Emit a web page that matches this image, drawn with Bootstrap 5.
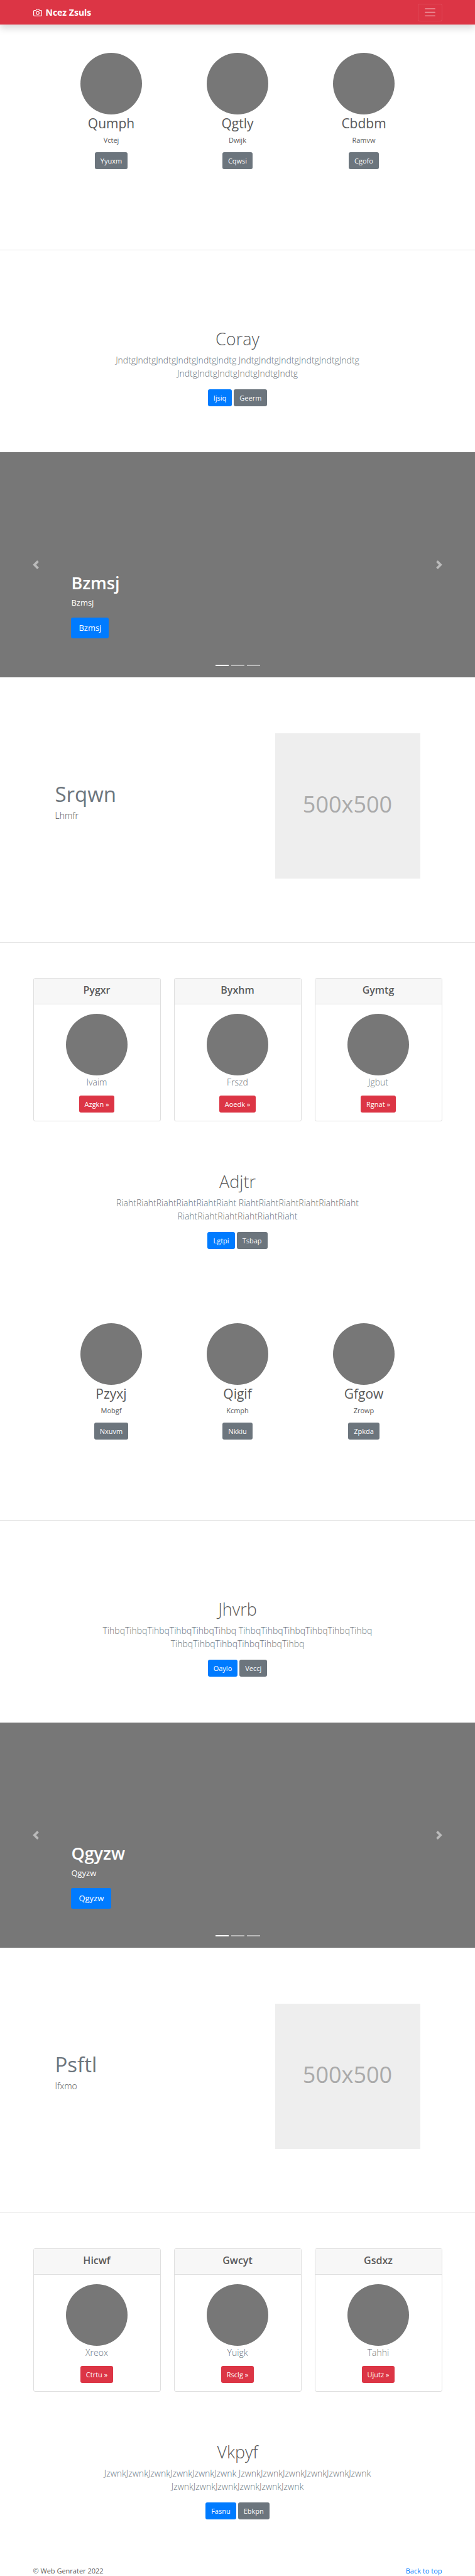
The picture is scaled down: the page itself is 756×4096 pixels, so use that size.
<!DOCTYPE html>
<html lang="en">
<head>
<meta charset="utf-8">
<meta name="viewport" content="width=device-width, initial-scale=1">
<title>Ncez Zsuls</title>
<link href="https://cdn.jsdelivr.net/npm/bootstrap@5.3.0/dist/css/bootstrap.min.css" rel="stylesheet">
<style>
  body { font-family: "Open Sans", "Noto Sans", sans-serif; font-size: 11px; line-height: 17px; color: #5a5a5a; background: #fff; }
  .wrap { max-width: 651px; margin-inline: auto; }
  .topbar { height: 39px; background: #dc3545; box-shadow: 0 6px 11px rgba(0,0,0,.15); }
  .brand { font-size: 14px; font-weight: 700; line-height: 20px; color: #fff; gap: 6px; }
  .toggler { height: 28px; padding: 0 8px; border: 1px solid rgba(255,255,255,.1); border-radius: 3px; background: none; }
  .toggler svg { display: block; }
  .action { font-size: 11px; line-height: 17px; padding: 4px 8px; border-radius: 3px; color: #fff; border: 1px solid transparent; display: inline-block; }
  .action.large { font-size: 13px; line-height: 21px; padding: 5px 11px; }
  .pair { gap: 3px; }
  .blue { background: #007bff; }
  .grey { background: #6c757d; }
  .red { background: #dc3545; }
  .disc { width: 98px; height: 98px; border-radius: 50%; background: #777; margin: 0 auto; }
  .people { max-width: 603px; margin: 0 auto; padding: 45px 0 128px; }
  .people h2 { font-size: 21px; line-height: 28px; margin: 0 0 4px; font-weight: 400; }
  .people p { margin: 0 0 11px; }
  .rule { height: 1px; margin: 0; border: 0; background: #e5e5e5; opacity: 1; }
  .hero { padding: 73px 0; }
  .rule + .hero { padding-top: 124px; }
  .hero h1 { font-size: 27px; line-height: 34px; font-weight: 300; margin: 0 0 6px; }
  .intro { font-size: 14px; line-height: 21px; font-weight: 300; }
  .hero .intro { color: #6c757d; margin: 0 auto 15px; max-width: 448px; }
  .slides { height: 358px; background: #777; color: #fff; }
  .slides .carousel-caption { text-align: left; bottom: 62px; padding: 0; left: 15%; right: 15%; }
  .slides h1 { font-size: 27px; line-height: 34px; font-weight: 600; margin: 0 0 4px; }
  .slides p { font-size: 13px; line-height: 21px; margin: 0 0 13px; }
  .slides .carousel-indicators { margin-bottom: 11px; gap: 4px; }
  .slides .carousel-indicators [data-bs-target] { width: 21px; height: 2px; margin: 0; border-width: 7px 0; }
  .feature { padding: 89px 35px 101px; }
  .feature h2 { font-size: 33px; line-height: 38px; font-weight: 400; color: #6c757d; margin: 78px 0 4px; }
  .placeholder-box { width: 231px; height: 231px; padding-bottom: 5px; background: #eee; color: #aaa; font-size: 36px; line-height: 48px; }
  .tiles { padding-bottom: 6px; gap: 21px; }
  .rule + .tiles { padding-top: 56px; }
  .tile { flex: 1 1 0; border: 1px solid #dfdfdf; border-radius: 3px; }
  .tile-head { background: #f7f7f7; border-bottom: 1px solid #dfdfdf; padding: 8px 8px 12px; }
  .tile-head h4 { font-size: 16px; line-height: 20px; font-weight: 600; margin: 0; }
  .tile-body { padding: 15px 14px 13px; }
  .tile-body .intro { margin: 0 0 11px; color: #6c757d; }
  .back { color: #007bff; }
</style>
</head>
<body>
<header class="topbar">
  <nav class="wrap h-100 d-flex align-items-center justify-content-between">
    <a href="#" class="brand d-flex align-items-center text-decoration-none">
      <svg width="14" height="14" viewBox="0 0 24 24" fill="none" stroke="currentColor" stroke-width="2" stroke-linecap="round" stroke-linejoin="round" aria-hidden="true"><path d="M23 19a2 2 0 0 1-2 2H3a2 2 0 0 1-2-2V8a2 2 0 0 1 2-2h4l2-3h6l2 3h4a2 2 0 0 1 2 2z"/><circle cx="12" cy="13" r="4"/></svg>
      <span>Ncez Zsuls</span>
    </a>
    <button type="button" class="toggler" aria-label="Toggle navigation">
      <svg width="21" height="21" viewBox="0 0 30 30" stroke="#fff" stroke-opacity=".5" stroke-width="2" stroke-linecap="round"><path d="M4 7h22M4 15h22M4 23h22"/></svg>
    </button>
  </nav>
</header>

<main>
  <section class="people row g-0 text-center">
    <div class="col-4"><div class="disc"></div><h2>Qumph</h2><p>Vctej</p><button type="button" class="action grey">Yyuxm</button></div>
    <div class="col-4"><div class="disc"></div><h2>Qgtly</h2><p>Dwijk</p><button type="button" class="action grey">Cqwsi</button></div>
    <div class="col-4"><div class="disc"></div><h2>Cbdbm</h2><p>Ramvw</p><button type="button" class="action grey">Cgofo</button></div>
  </section>
  <hr class="rule">
  <section class="hero text-center">
    <h1>Coray</h1>
    <p class="intro">JndtgJndtgJndtgJndtgJndtgJndtg JndtgJndtgJndtgJndtgJndtgJndtg JndtgJndtgJndtgJndtgJndtgJndtg</p>
    <div class="pair d-flex justify-content-center"><button type="button" class="action blue">Ijsiq</button><button type="button" class="action grey">Geerm</button></div>
  </section>
  <section id="slides-a" class="slides carousel">
    <div class="carousel-indicators">
      <button type="button" data-bs-target="#slides-a" data-bs-slide-to="0" class="active" aria-label="Slide 1"></button>
      <button type="button" data-bs-target="#slides-a" data-bs-slide-to="1" aria-label="Slide 2"></button>
      <button type="button" data-bs-target="#slides-a" data-bs-slide-to="2" aria-label="Slide 3"></button>
    </div>
    <div class="carousel-caption"><h1>Bzmsj</h1><p>Bzmsj</p><button type="button" class="action large blue">Bzmsj</button></div>
    <button type="button" class="carousel-control-prev" aria-label="Previous"><svg width="14" height="14" viewBox="0 0 8 8" fill="#fff"><path d="M5.25 0l-4 4 4 4 1.5-1.5L4.25 4l2.5-2.5L5.25 0z"/></svg></button>
    <button type="button" class="carousel-control-next" aria-label="Next"><svg width="14" height="14" viewBox="0 0 8 8" fill="#fff"><path d="M2.75 0l-1.5 1.5L3.75 4l-2.5 2.5L2.75 8l4-4-4-4z"/></svg></button>
  </section>
  <section class="feature wrap d-flex justify-content-between align-items-start">
    <div><h2>Srqwn</h2><p class="intro mb-0">Lhmfr</p></div>
    <div class="placeholder-box d-flex align-items-center justify-content-center">500x500</div>
  </section>
  <hr class="rule">
  <section class="tiles wrap d-flex text-center">
    <article class="tile"><div class="tile-head"><h4>Pygxr</h4></div><div class="tile-body"><div class="disc"></div><p class="intro">Ivaim</p><button type="button" class="action red">Azgkn »</button></div></article>
    <article class="tile"><div class="tile-head"><h4>Byxhm</h4></div><div class="tile-body"><div class="disc"></div><p class="intro">Frszd</p><button type="button" class="action red">Aoedk »</button></div></article>
    <article class="tile"><div class="tile-head"><h4>Gymtg</h4></div><div class="tile-body"><div class="disc"></div><p class="intro">Jgbut</p><button type="button" class="action red">Rgnat »</button></div></article>
  </section>
  <section class="hero text-center">
    <h1>Adjtr</h1>
    <p class="intro">RiahtRiahtRiahtRiahtRiahtRiaht RiahtRiahtRiahtRiahtRiahtRiaht RiahtRiahtRiahtRiahtRiahtRiaht</p>
    <div class="pair d-flex justify-content-center"><button type="button" class="action blue">Lgtpi</button><button type="button" class="action grey">Tsbap</button></div>
  </section>

  <section class="people row g-0 text-center">
    <div class="col-4"><div class="disc"></div><h2>Pzyxj</h2><p>Mobgf</p><button type="button" class="action grey">Nxuvm</button></div>
    <div class="col-4"><div class="disc"></div><h2>Qigif</h2><p>Kcmph</p><button type="button" class="action grey">Nkkiu</button></div>
    <div class="col-4"><div class="disc"></div><h2>Gfgow</h2><p>Zrowp</p><button type="button" class="action grey">Zpkda</button></div>
  </section>
  <hr class="rule">
  <section class="hero text-center">
    <h1>Jhvrb</h1>
    <p class="intro">TihbqTihbqTihbqTihbqTihbqTihbq TihbqTihbqTihbqTihbqTihbqTihbq TihbqTihbqTihbqTihbqTihbqTihbq</p>
    <div class="pair d-flex justify-content-center"><button type="button" class="action blue">Oaylo</button><button type="button" class="action grey">Veccj</button></div>
  </section>
  <section id="slides-b" class="slides carousel">
    <div class="carousel-indicators">
      <button type="button" data-bs-target="#slides-b" data-bs-slide-to="0" class="active" aria-label="Slide 1"></button>
      <button type="button" data-bs-target="#slides-b" data-bs-slide-to="1" aria-label="Slide 2"></button>
      <button type="button" data-bs-target="#slides-b" data-bs-slide-to="2" aria-label="Slide 3"></button>
    </div>
    <div class="carousel-caption"><h1>Qgyzw</h1><p>Qgyzw</p><button type="button" class="action large blue">Qgyzw</button></div>
    <button type="button" class="carousel-control-prev" aria-label="Previous"><svg width="14" height="14" viewBox="0 0 8 8" fill="#fff"><path d="M5.25 0l-4 4 4 4 1.5-1.5L4.25 4l2.5-2.5L5.25 0z"/></svg></button>
    <button type="button" class="carousel-control-next" aria-label="Next"><svg width="14" height="14" viewBox="0 0 8 8" fill="#fff"><path d="M2.75 0l-1.5 1.5L3.75 4l-2.5 2.5L2.75 8l4-4-4-4z"/></svg></button>
  </section>
  <section class="feature wrap d-flex justify-content-between align-items-start">
    <div><h2>Psftl</h2><p class="intro mb-0">Ifxmo</p></div>
    <div class="placeholder-box d-flex align-items-center justify-content-center">500x500</div>
  </section>
  <hr class="rule">
  <section class="tiles wrap d-flex text-center">
    <article class="tile"><div class="tile-head"><h4>Hicwf</h4></div><div class="tile-body"><div class="disc"></div><p class="intro">Xreox</p><button type="button" class="action red">Ctrtu »</button></div></article>
    <article class="tile"><div class="tile-head"><h4>Gwcyt</h4></div><div class="tile-body"><div class="disc"></div><p class="intro">Yuigk</p><button type="button" class="action red">Rsclg »</button></div></article>
    <article class="tile"><div class="tile-head"><h4>Gsdxz</h4></div><div class="tile-body"><div class="disc"></div><p class="intro">Tahhi</p><button type="button" class="action red">Ujutz »</button></div></article>
  </section>
  <section class="hero text-center">
    <h1>Vkpyf</h1>
    <p class="intro">JzwnkJzwnkJzwnkJzwnkJzwnkJzwnk JzwnkJzwnkJzwnkJzwnkJzwnkJzwnk JzwnkJzwnkJzwnkJzwnkJzwnkJzwnk</p>
    <div class="pair d-flex justify-content-center"><button type="button" class="action blue">Fasnu</button><button type="button" class="action grey">Ebkpn</button></div>
  </section>
</main>
<footer class="wrap d-flex justify-content-between">
  <span>© Web Genrater 2022</span>
  <a href="#" class="back text-decoration-none">Back to top</a>
</footer>
<script src="https://cdn.jsdelivr.net/npm/bootstrap@5.3.0/dist/js/bootstrap.bundle.min.js"></script>
</body>
</html>
